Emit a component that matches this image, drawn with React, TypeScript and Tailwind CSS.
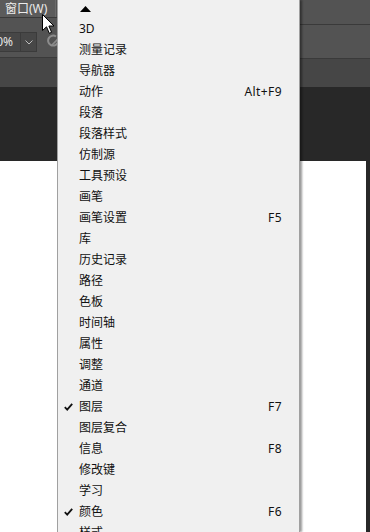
const items: { label: string; key?: string; checked?: boolean }[] = [
  { label: "3D" },
  { label: "测量记录" },
  { label: "导航器" },
  { label: "动作", key: "Alt+F9" },
  { label: "段落" },
  { label: "段落样式" },
  { label: "仿制源" },
  { label: "工具预设" },
  { label: "画笔" },
  { label: "画笔设置", key: "F5" },
  { label: "库" },
  { label: "历史记录" },
  { label: "路径" },
  { label: "色板" },
  { label: "时间轴" },
  { label: "属性" },
  { label: "调整" },
  { label: "通道" },
  { label: "图层", key: "F7", checked: true },
  { label: "图层复合" },
  { label: "信息", key: "F8" },
  { label: "修改键" },
  { label: "学习" },
  { label: "颜色", key: "F6", checked: true },
  { label: "样式" },
];

const font = { fontFamily: '"Microsoft YaHei", "Noto Sans", "Noto Sans CJK SC", sans-serif' };

function Check() {
  return (
    <svg width="9" height="8" viewBox="0 0 9 8" className="absolute left-[6px] top-[7px]">
      <path d="M0.8 4.2 L3.2 6.6 L8.2 0.8" fill="none" stroke="#111" strokeWidth="1.8" />
    </svg>
  );
}

function Cursor() {
  return (
    <svg width="14" height="21" viewBox="0 0 14 21" className="absolute left-[42px] top-[14px] z-20">
      <path
        d="M0.5 0.5 L0.5 16.5 L4.5 12.8 L7.3 19.3 L9.6 18.3 L6.9 12 L12 12 Z"
        fill="#fff"
        stroke="#000"
        strokeWidth="1"
        strokeLinejoin="miter"
      />
    </svg>
  );
}

export default function App() {
  return (
    <div className="relative flex w-[370px] h-[532px] overflow-hidden bg-[#282828]" style={font}>
      {/* Left: app chrome visible beside the menu */}
      <div className="w-[57px] shrink-0 flex flex-col">
        <div className="h-[17px] bg-[#535353] flex">
          <div className="w-[56px] h-[17px] bg-[#5b5b5b] border-r border-[#6a6a6a] flex items-center pl-[5px] text-[12px] leading-none text-[#ececec] whitespace-nowrap">
            窗口(W)
          </div>
        </div>
        <div className="h-px bg-[#3a3a3a]" />
        <div className="h-[39px] bg-[#535353] flex items-start pt-[14px] overflow-hidden">
          <div className="-ml-[10px] w-[31px] h-[20px] shrink-0 bg-[#474747] border border-[#3b3b3b] flex items-center justify-end pr-[7px] text-[12px] text-[#e4e4e4] leading-none">
            0%
          </div>
          <div className="w-[16px] h-[20px] shrink-0 bg-[#474747] border border-l-0 border-[#3b3b3b] flex items-center justify-center">
            <svg width="8" height="5" viewBox="0 0 8 5">
              <path d="M0.5 0.5 L4 4 L7.5 0.5" fill="none" stroke="#bdbdbd" strokeWidth="1" />
            </svg>
          </div>
          <svg width="12" height="14" viewBox="0 0 12 14" className="ml-[10px] mt-[2px] shrink-0">
            <path d="M9 2.5 A5 5 0 1 0 10.5 9" fill="none" stroke="#8c8c8c" strokeWidth="2" />
            <path d="M5 11 L11 5" fill="none" stroke="#8c8c8c" strokeWidth="1.6" />
          </svg>
        </div>
        <div className="h-px bg-[#3a3a3a]" />
        <div className="h-[29px] bg-[#464646]" />
        <div className="h-[74px] bg-[#282828]" />
        <div className="flex-1 bg-white" />
      </div>

      {/* Window menu */}
      <div className="relative z-10 w-[243px] shrink-0 bg-[#f0f0f0] border-l border-r border-[#a0a0a0] shadow-[2px_0_2px_rgba(0,0,0,0.4)]">
        <div className="h-[18px] pl-[22px] pt-[6px]">
          <svg width="11" height="6" viewBox="0 0 11 6">
            <path d="M0 6 L5.5 0 L11 6 Z" fill="#000" />
          </svg>
        </div>
        {items.map((it) => (
          <div
            key={it.label}
            className="relative h-[21px] flex items-center justify-between pl-[21px] pr-[17px] text-[12px] leading-none text-[#111]"
          >
            {it.checked && <Check />}
            <span>{it.label}</span>
            {it.key && <span className="tracking-[0.4px]">{it.key}</span>}
          </div>
        ))}
      </div>

      {/* Right: app chrome */}
      <div className="flex-1 flex flex-col">
        <div className="h-[24px] bg-[#535353]" />
        <div className="h-px bg-[#3a3a3a]" />
        <div className="h-[33px] bg-[#535353]" />
        <div className="h-px bg-[#3a3a3a]" />
        <div className="h-[28px] bg-[#464646]" />
        <div className="h-[74px] bg-[#282828]" />
        <div className="flex-1 flex">
          <div className="flex-1 bg-white" />
          <div className="w-[4px] bg-[#282828]" />
        </div>
      </div>

      <Cursor />
    </div>
  );
}
